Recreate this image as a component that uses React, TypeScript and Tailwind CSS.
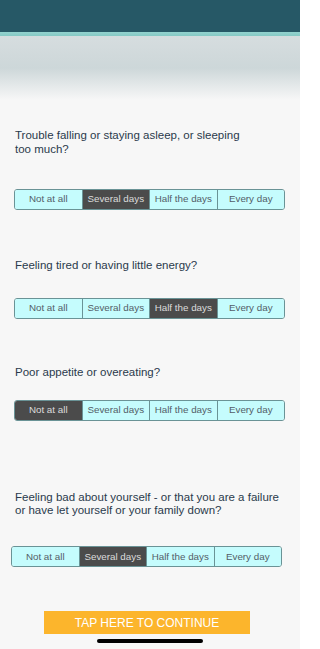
import React from "react";

const OPTIONS = ["Not at all", "Several days", "Half the days", "Every day"];

function Seg({ selected, className }: { selected: number; className: string }) {
  return (
    <div
      className={
        "flex h-[21px] w-[271px] shrink-0 overflow-hidden rounded-[3px] border border-[#6a9396] " +
        className
      }
    >
      {OPTIONS.map((o, i) => (
        <div
          key={o}
          className={
            "flex flex-1 items-center justify-center text-[9.8px] leading-none " +
            (i > 0 ? "border-l border-[#6a9396] " : "") +
            (i === selected
              ? "bg-[#4b4b4b] text-[#dcdcdc]"
              : "bg-[#c5fcfd] text-[#535e68]")
          }
        >
          {o}
        </div>
      ))}
    </div>
  );
}

function Q({ lines, className }: { lines: string[]; className: string }) {
  return (
    <div className={"shrink-0 pl-[15px] text-[11.5px] leading-[13.5px] text-[#2a3a4c] " + className}>
      {lines.map((l) => (
        <div key={l} className="whitespace-nowrap">
          {l}
        </div>
      ))}
    </div>
  );
}

export default function App() {
  return (
    <div
      className="flex h-[649px] w-[300px] flex-col overflow-hidden bg-[#f7f7f7]"
      style={{ fontFamily: '"Liberation Sans", Arial, sans-serif' }}
    >
      <div className="h-[32px] shrink-0 bg-[#265866]" />
      <div className="h-[4px] shrink-0 bg-gradient-to-b from-[#93d3cf] to-[#86c9c4]" />
      <div className="h-[64px] shrink-0 bg-gradient-to-b from-[#d6dddf] via-[#cdd7d9] to-[#f7f7f7]" />

      <Q className="mt-[29px]" lines={["Trouble falling or staying asleep, or sleeping", "too much?"]} />
      <Seg selected={1} className="ml-[14px] mt-[32.5px]" />

      <Q className="mt-[49px]" lines={["Feeling tired or having little energy?"]} />
      <Seg selected={2} className="ml-[14px] mt-[25.5px]" />

      <Q className="mt-[47.5px]" lines={["Poor appetite or overeating?"]} />
      <Seg selected={0} className="ml-[14px] mt-[20px]" />

      <Q
        className="mt-[70px]"
        lines={["Feeling bad about yourself - or that you are a failure", "or have let yourself or your family down?"]}
      />
      <Seg selected={1} className="ml-[11px] mt-[28.5px]" />

      <div className="ml-[44px] mt-[44px] flex h-[23px] w-[206px] shrink-0 items-center justify-center bg-[#fcb52c] text-[12px] text-white">
        TAP HERE TO CONTINUE
      </div>
      <div className="ml-[97px] mt-[5px] h-[4px] w-[106px] shrink-0 rounded-full bg-black" />
    </div>
  );
}
